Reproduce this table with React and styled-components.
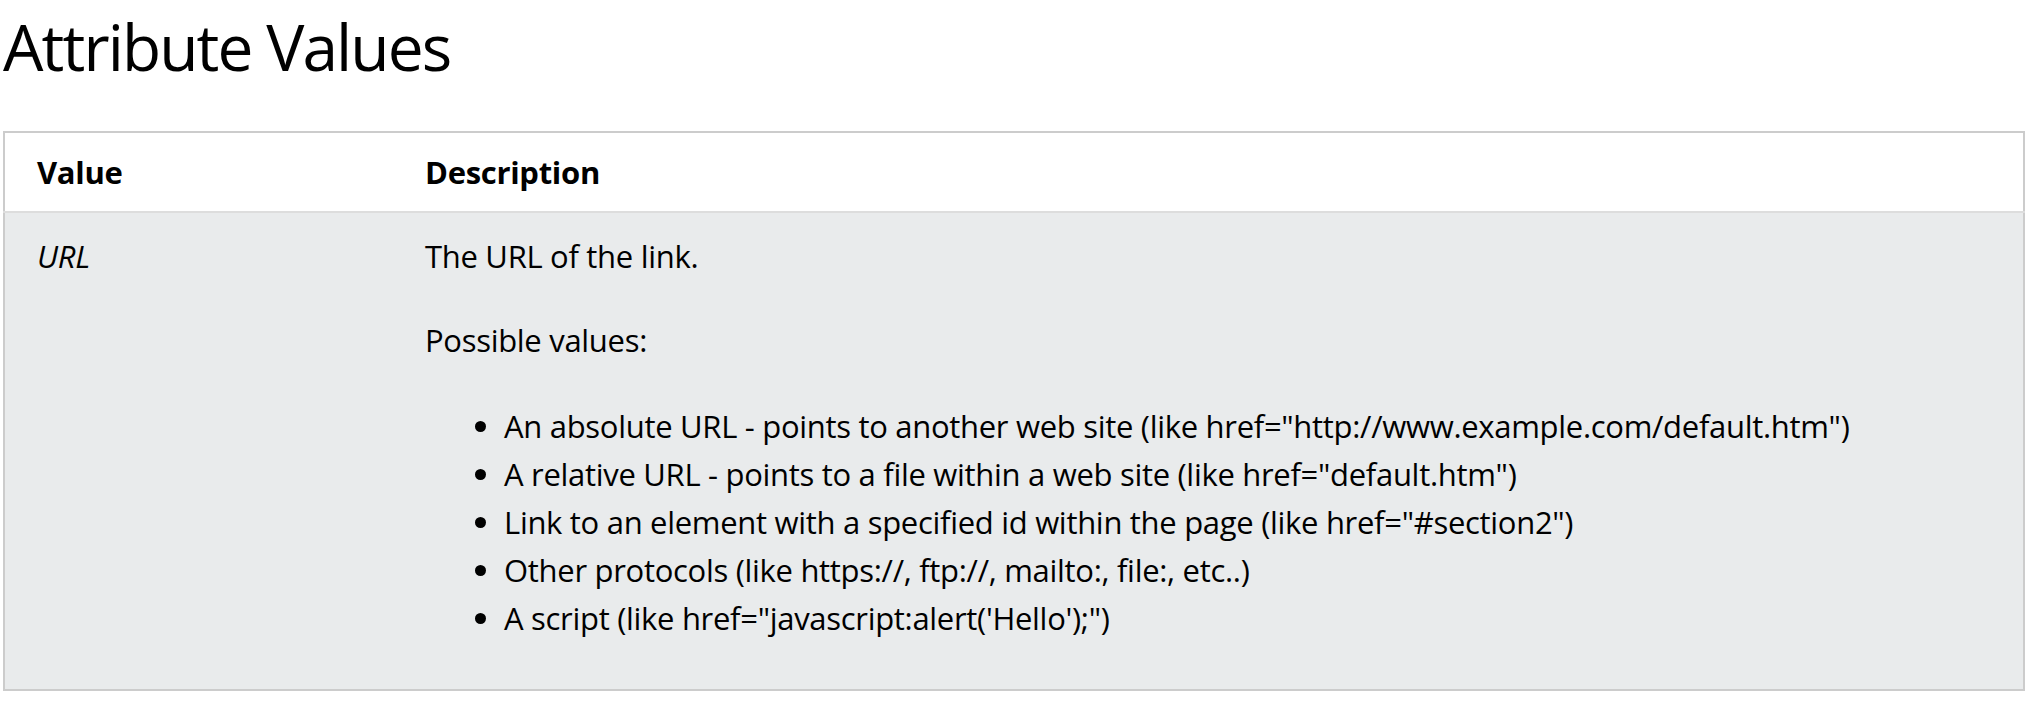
import React from 'react';
import styled, { createGlobalStyle } from 'styled-components';

const GlobalStyle = createGlobalStyle`
  body {
    margin: 0;
    background: #fff;
    color: #000;
    font-family: "Open Sans", "Noto Sans", sans-serif;
  }
`;

const Page = styled.div`
  padding: 0 9px 0 3px;
`;

const Title = styled.h2`
  font-size: 64px;
  font-weight: 400;
  letter-spacing: -1.9px;
  line-height: 82px;
  margin: 0 0 43px 0;
  padding-top: 6px;
`;

const Table = styled.table`
  width: 2022px;
  border-collapse: collapse;
  border: 2px solid #ccc;
  font-size: 31px;
  letter-spacing: -0.3px;
  line-height: 48px;
`;

const HeadCell = styled.th`
  text-align: left;
  font-weight: 700;
  padding: 15px 17px 15px ${({ first }) => (first ? '32px' : '17px')};
  width: ${({ first }) => (first ? '20%' : 'auto')};
  border-bottom: 2px solid #ddd;
  background: #fff;
`;

const Row = styled.tr`
  background: #e9ebec;
`;

const Cell = styled.td`
  vertical-align: top;
  padding: 19px 17px 17px ${({ first }) => (first ? '32px' : '17px')};
  font-style: ${({ italic }) => (italic ? 'italic' : 'normal')};
`;

const Para = styled.p`
  margin: 36px 0 35px 0;
`;

const List = styled.ul`
  margin: 38px 0 30px 0;
  padding-left: 79px;
`;

const items = [
  'An absolute URL - points to another web site (like href="http://www.example.com/default.htm")',
  'A relative URL - points to a file within a web site (like href="default.htm")',
  'Link to an element with a specified id within the page (like href="#section2")',
  'Other protocols (like https://, ftp://, mailto:, file:, etc..)',
  'A script (like href="javascript:alert(\'Hello\');")',
];

export default function App() {
  return (
    <Page>
      <GlobalStyle />
      <Title>Attribute Values</Title>
      <Table>
        <thead>
          <tr>
            <HeadCell first>Value</HeadCell>
            <HeadCell>Description</HeadCell>
          </tr>
        </thead>
        <tbody>
          <Row>
            <Cell first italic>URL</Cell>
            <Cell>
              The URL of the link.
              <Para>Possible values:</Para>
              <List>
                {items.map((text) => (
                  <li key={text}>{text}</li>
                ))}
              </List>
            </Cell>
          </Row>
        </tbody>
      </Table>
    </Page>
  );
}
